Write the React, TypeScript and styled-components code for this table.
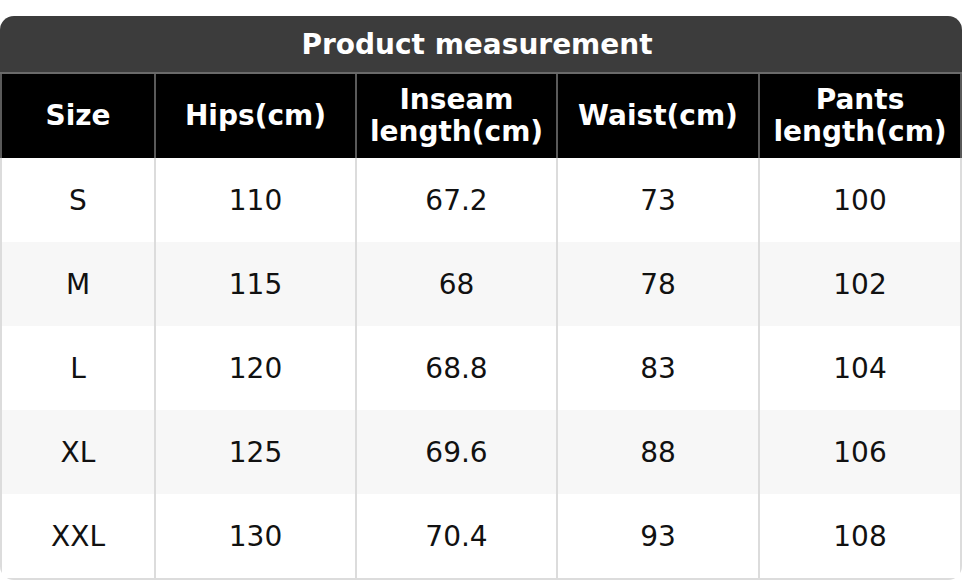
import React from 'react'
import styled, {createGlobalStyle} from 'styled-components'

const GlobalStyle = createGlobalStyle`
    html, body {
        margin: 0;
        padding: 0;
        background: #ffffff;
        font-family: "DejaVu Sans", "Liberation Sans", sans-serif;
    }
`

const columns = ['Size', 'Hips(cm)', 'Inseam length(cm)', 'Waist(cm)', 'Pants length(cm)']

const headerLines: Array<Array<string>> = [
    ['Size'],
    ['Hips(cm)'],
    ['Inseam', 'length(cm)'],
    ['Waist(cm)'],
    ['Pants', 'length(cm)'],
]

const rows: Array<Array<string>> = [
    ['S', '110', '67.2', '73', '100'],
    ['M', '115', '68', '78', '102'],
    ['L', '120', '68.8', '83', '104'],
    ['XL', '125', '69.6', '88', '106'],
    ['XXL', '130', '70.4', '93', '108'],
]

export default function App() {
    return (
        <>
            <GlobalStyle />
            <Page>
                <Card>
                    <Title>Product measurement</Title>
                    <Grid>
                        {headerLines.map((lines, i) => (
                            <HeadCell key={columns[i]} $last={i === columns.length - 1}>
                                {lines.map(line => (
                                    <span key={line}>{line}</span>
                                ))}
                            </HeadCell>
                        ))}
                        {rows.map((row, r) =>
                            row.map((value, c) => (
                                <Cell
                                    key={`${r}-${c}`}
                                    $striped={r % 2 === 1}
                                    $last={c === row.length - 1}
                                    $bottom={r === rows.length - 1}
                                >
                                    {value}
                                </Cell>
                            ))
                        )}
                    </Grid>
                </Card>
            </Page>
        </>
    )
}

const Page = styled.div`
    padding-top: 16px;
    width: 962px;
`

const Card = styled.div`
    border-radius: 14px;
    overflow: hidden;
    background: #ffffff;
`

const Title = styled.div`
    height: 56px;
    display: flex;
    align-items: center;
    justify-content: center;
    padding-right: 8px;
    background: #3c3c3c;
    color: #ffffff;
    font-weight: bold;
    font-size: 28px;
    border-bottom: 2px solid #6a6a6a;
`

const Grid = styled.div`
    display: grid;
    grid-template-columns: 154px 201px 201px 202px 204px;
`

const HeadCell = styled.div<{$last?: boolean}>`
    height: 84px;
    display: flex;
    flex-direction: column;
    align-items: center;
    justify-content: center;
    background: #000000;
    color: #ffffff;
    font-weight: bold;
    font-size: 28px;
    line-height: 32px;
    border-left: 2px solid #5a5a5a;
    border-right: ${({$last}) => ($last ? '2px solid #5a5a5a' : 'none')};
`

const Cell = styled.div<{$striped?: boolean; $last?: boolean; $bottom?: boolean}>`
    display: flex;
    align-items: center;
    justify-content: center;
    background: ${({$striped}) => ($striped ? '#f7f7f7' : '#ffffff')};
    color: #111111;
    font-size: 28px;
    border-left: 2px solid #dcdcdc;
    border-right: ${({$last}) => ($last ? '2px solid #dcdcdc' : 'none')};
    border-bottom: ${({$bottom}) => ($bottom ? '2px solid #dcdcdc' : 'none')};
    box-sizing: border-box;
    height: ${({$bottom}) => ($bottom ? '86px' : '84px')};
`
